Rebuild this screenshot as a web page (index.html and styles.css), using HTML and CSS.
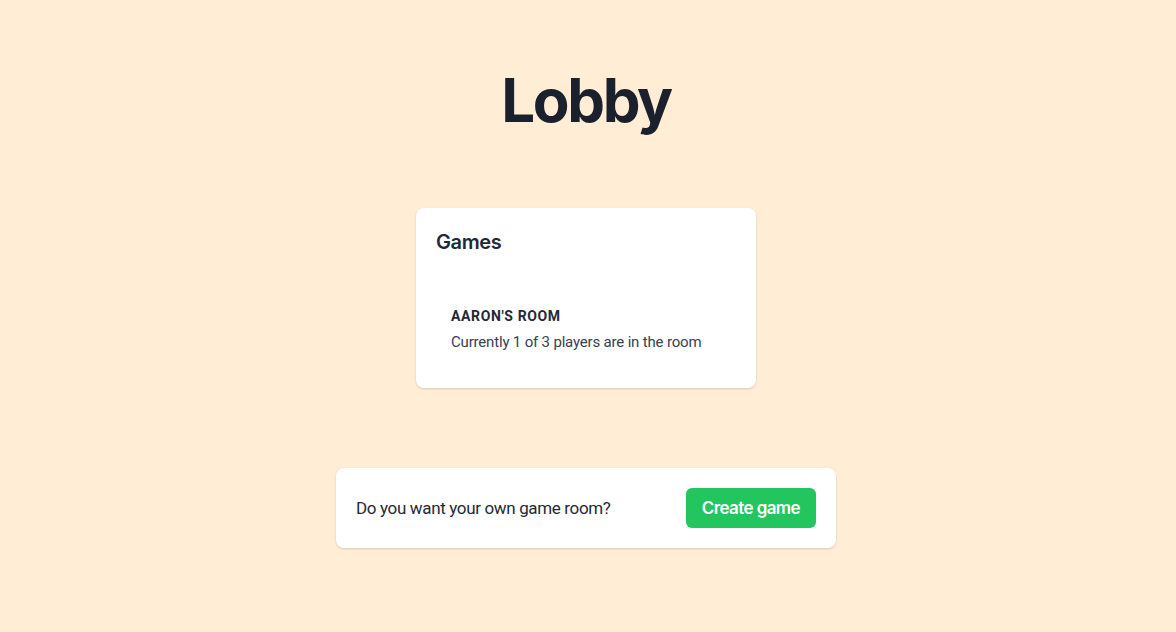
FILE: index.html
```html
<!DOCTYPE html>
<html lang="en">
<head>
<meta charset="utf-8">
<title>Lobby</title>
<link rel="stylesheet" href="styles.css">
</head>
<body>
<main class="page">
  <h1 class="title">Lobby</h1>
  <section class="card games">
    <h2 class="games-title">Games</h2>
    <ul class="room-list">
      <li class="room">
        <div class="room-name">Aaron's room</div>
        <div class="room-desc">Currently 1 of 3 players are in the room</div>
      </li>
    </ul>
  </section>
  <section class="card create">
    <p class="create-text">Do you want your own game room?</p>
    <button class="btn" type="button">Create game</button>
  </section>
</main>
</body>
</html>
```

FILE: styles.css
```css
* { box-sizing: border-box; }
html, body {
  margin: 0;
  padding: 0;
  background: #ffedd5;
}
body {
  font-family: Inter, "Noto Sans", sans-serif;
  color: #1f2937;
  min-height: 632px;
}
.page {
  display: flex;
  flex-direction: column;
  align-items: center;
  padding-top: 70px;
  padding-right: 4px;
}
.title {
  margin: 0;
  font-size: 60px;
  line-height: 60px;
  font-weight: 700;
  color: #1a202c;
  letter-spacing: -0.04em;
}
.card {
  background: #ffffff;
  border-radius: 8px;
  box-shadow: 0 1px 3px rgba(0,0,0,0.10), 0 1px 2px rgba(0,0,0,0.06);
}
.games {
  margin-top: 78px;
  width: 340px;
  padding: 20px;
}
.games-title {
  margin: 0;
  font-size: 20px;
  line-height: 28px;
  font-weight: 600;
  letter-spacing: -0.02em;
  color: #1f2937;
}
.room-list {
  list-style: none;
  margin: 38px 0 0 0;
  padding: 0;
}
.room {
  padding: 12px 15px 14px;
}
.room-name {
  font-family: Roboto, "Noto Sans", sans-serif;
  font-size: 14px;
  line-height: 20px;
  font-weight: 700;
  text-transform: uppercase;
  letter-spacing: 0.045em;
  color: #1f2937;
}
.room-desc {
  font-family: Roboto, "Noto Sans", sans-serif;
  margin-top: 4px;
  font-size: 15px;
  line-height: 24px;
  letter-spacing: -0.18px;
  color: #374151;
  white-space: nowrap;
}
.create {
  margin-top: 80px;
  width: 500px;
  padding: 20px;
  display: flex;
  align-items: center;
  justify-content: space-between;
}
.create-text {
  font-family: Roboto, "Noto Sans", sans-serif;
  margin: 0;
  font-size: 17px;
  line-height: 28px;
  letter-spacing: -0.35px;
  color: #1f2937;
}
.btn {
  font-family: Inter, "Noto Sans", sans-serif;
  font-size: 17px;
  line-height: 28px;
  font-weight: 600;
  letter-spacing: -0.6px;
  color: #ffffff;
  background: #22c55e;
  border: none;
  border-radius: 6px;
  height: 40px;
  padding: 0 16px;
  white-space: nowrap;
}
```
